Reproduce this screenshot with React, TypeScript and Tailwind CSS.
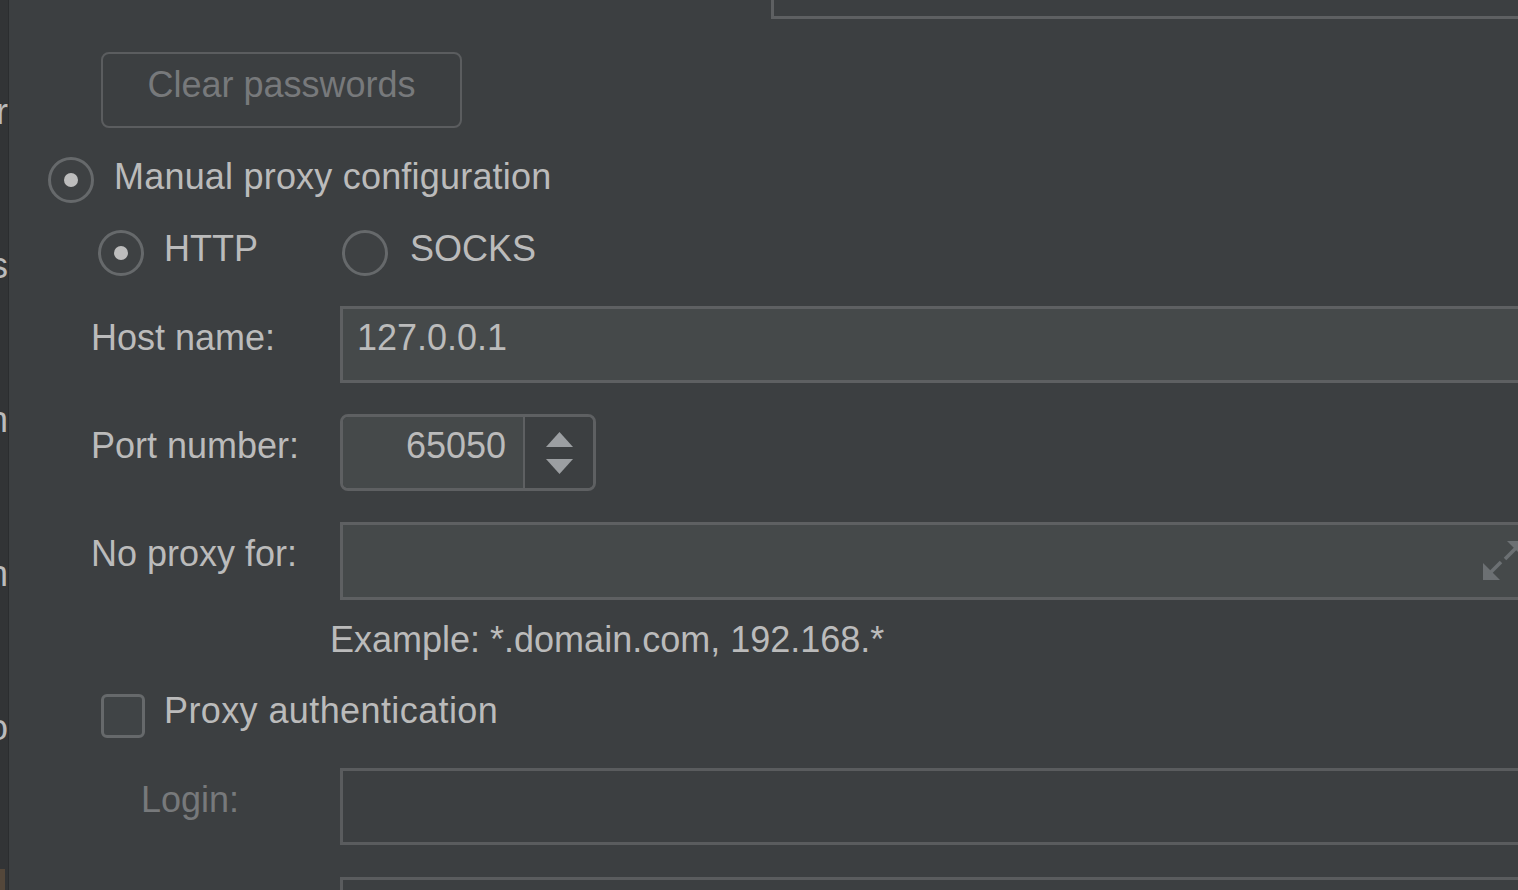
import { useState } from 'react'

const font = "font-['Liberation_Sans',Arial,sans-serif]"

function Radio({ checked }: { checked: boolean }) {
  return (
    <div className="w-[46px] h-[46px] shrink-0 rounded-full border-[3px] border-[#66696b] bg-[#3e4143] flex items-center justify-center">
      {checked && <div className="w-[14px] h-[14px] rounded-full bg-[#bdbdbd]" />}
    </div>
  )
}

function ExpandIcon() {
  return (
    <svg width="40" height="44" viewBox="0 0 40 44" className="absolute left-[1140px] top-[13px]">
      <polygon points="0,42 0,25 17,42" fill="#6c7073" />
      <line x1="6" y1="36" x2="18" y2="24" stroke="#6c7073" strokeWidth="3.5" />
      <polygon points="24,3 41,3 41,20" fill="#6c7073" />
      <line x1="22" y1="21" x2="33" y2="10" stroke="#6c7073" strokeWidth="3.5" />
    </svg>
  )
}

function SideStrip() {
  const words = ['Keymap Server', 'Plugins', 'Build, Execution', 'Migration', 'Tools Info']
  return (
    <div className="w-[9px] shrink-0 h-full bg-[#323436] border-r border-[#2b2d2f] flex flex-col overflow-hidden">
      {words.map((w, i) => (
        <div
          key={w}
          className={`${i === 0 ? 'mt-[94px]' : 'mt-[118px]'} shrink-0 h-[36px] leading-none text-[36px] text-[#bbbbbb] whitespace-nowrap flex justify-end`}
        >
          <span>{w}</span>
        </div>
      ))}
      <div className="mt-[123px] shrink-0 w-[5px] h-[22px] bg-[#54473a]" />
    </div>
  )
}

export default function App() {
  const [manual] = useState(true)
  const [http] = useState(true)

  return (
    <div className={`w-[1518px] h-[890px] overflow-hidden bg-[#3c3f41] flex ${font} text-[36px] leading-none text-[#bbbbbb]`}>
      <SideStrip />

      <div className="flex-1 flex flex-col min-w-0">
        {/* field above, cut off */}
        <div className="shrink-0 h-[19px] ml-[762px] mr-[-20px] border-l-[3px] border-b-[3px] border-[#5e6062]" />

        {/* Clear passwords */}
        <div className="shrink-0 mt-[33px] ml-[92px] w-[361px] h-[76px] rounded-[8px] border-2 border-[#5b5d5f] flex items-center justify-center">
          <span className="mb-[11px] text-[#77797b]">Clear passwords</span>
        </div>

        {/* Manual proxy configuration */}
        <div className="shrink-0 mt-[29px] ml-[39px] h-[45px] flex items-center gap-[20px]">
          <Radio checked={manual} />
          <span className="mb-[6px] tracking-[0.2px]">Manual proxy configuration</span>
        </div>

        {/* HTTP / SOCKS */}
        <div className="shrink-0 mt-[28px] ml-[89px] h-[46px] flex items-center">
          <div className="w-[244px] flex items-center gap-[20px]">
            <Radio checked={http} />
            <span className="mb-[9px]">HTTP</span>
          </div>
          <div className="flex items-center gap-[22px]">
            <Radio checked={!http} />
            <span className="mb-[9px]">SOCKS</span>
          </div>
        </div>

        {/* Host name */}
        <div className="shrink-0 mt-[30px] h-[77px] flex">
          <div className="ml-[82px] w-[249px] pt-[14px]">Host name:</div>
          <div className="flex-1 mr-[-20px] bg-[#45494a] border-[3px] border-[#5e6062] pl-[14px] pt-[11px]">127.0.0.1</div>
        </div>

        {/* Port number */}
        <div className="shrink-0 mt-[31px] h-[77px] flex">
          <div className="ml-[82px] w-[249px] pt-[14px]">Port number:</div>
          <div className="w-[256px] rounded-[8px] border-[3px] border-[#5e6062] overflow-hidden flex">
            <div className="w-[180px] bg-[#45494a] text-right pr-[17px] pt-[11px]">65050</div>
            <div className="flex-1 border-l-2 border-[#5e6062] bg-[#3c3f41] flex items-center justify-center">
              <svg width="27" height="42" viewBox="0 0 27 42">
                <polygon points="13.5,0 27,15 0,15" fill="#9c9fa2" />
                <polygon points="0,27 27,27 13.5,42" fill="#9c9fa2" />
              </svg>
            </div>
          </div>
        </div>

        {/* No proxy for */}
        <div className="shrink-0 mt-[31px] h-[78px] flex">
          <div className="ml-[82px] w-[249px] pt-[14px]">No proxy for:</div>
          <div className="relative flex-1 mr-[-20px] bg-[#45494a] border-[3px] border-[#5e6062]">
            <ExpandIcon />
          </div>
        </div>

        <div className="shrink-0 mt-[22px] ml-[321px] h-[36px]">Example: *.domain.com, 192.168.*</div>

        {/* Proxy authentication */}
        <div className="shrink-0 mt-[36px] ml-[92px] h-[44px] flex items-center gap-[19px]">
          <div className="w-[44px] h-[44px] rounded-[6px] border-[3px] border-[#66696b] bg-[#404446]" />
          <span className="mb-[11px] tracking-[0.4px]">Proxy authentication</span>
        </div>

        {/* Login */}
        <div className="shrink-0 mt-[30px] h-[77px] flex">
          <div className="ml-[82px] w-[249px] pt-[14px] pl-[50px] text-[#77797b]">Login:</div>
          <div className="flex-1 mr-[-20px] border-[3px] border-[#5a5c5e]" />
        </div>

        {/* Password, cut off */}
        <div className="shrink-0 mt-[32px] h-[77px] flex">
          <div className="ml-[82px] w-[249px] pt-[14px] pl-[50px] text-[#77797b]">Password:</div>
          <div className="flex-1 mr-[-20px] border-[3px] border-[#5a5c5e]" />
        </div>
      </div>
    </div>
  )
}
